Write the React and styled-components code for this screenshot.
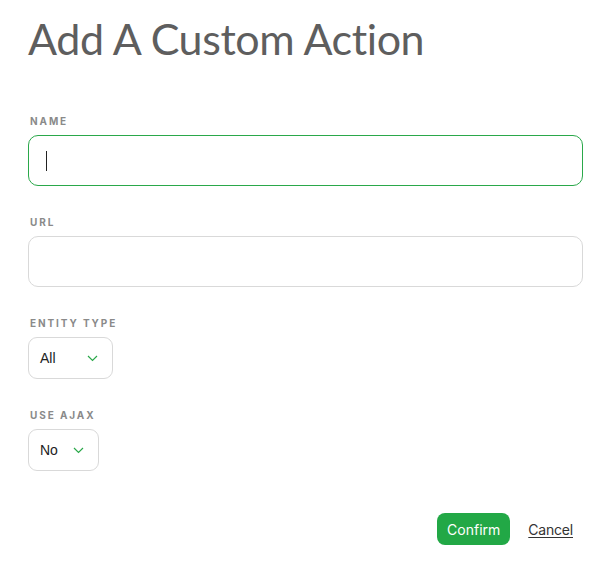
import React, { useState } from "react"
import styled, { createGlobalStyle } from "styled-components"

const GlobalStyle = createGlobalStyle`
  body {
    margin: 0;
    background: #fff;
  }
`

const Page = styled.div`
  padding: 14px 25px 0 28px;
  width: 608px;
  box-sizing: border-box;
`

const Title = styled.h1`
  font-family: Lato, "Open Sans", sans-serif;
  font-weight: 400;
  font-size: 43px;
  line-height: 50px;
  color: #5e5e5e;
  margin: 0 0 50px 0;
  letter-spacing: -0.4px;
`

const Field = styled.div`
  margin-bottom: ${(props) => props.gap ?? 29}px;
`

const Label = styled.div`
  font-family: Inter, "Liberation Sans", sans-serif;
  font-size: 10px;
  font-weight: 700;
  letter-spacing: 1.9px;
  line-height: 14px;
  color: #8a8a8a;
  margin: 0 0 7px 2px;
  text-transform: uppercase;
`

const Input = styled.div`
  height: 51px;
  box-sizing: border-box;
  border: 1px solid ${(props) => (props.focused ? "#2aa84a" : "#d9d9d9")};
  border-radius: 10px;
  display: flex;
  align-items: center;
  padding-left: 17px;
`

const Caret = styled.div`
  width: 1px;
  height: 20px;
  background: #222;
`

const Select = styled.div`
  width: ${(props) => props.width}px;
  height: 42px;
  box-sizing: border-box;
  border: 1px solid #d9d9d9;
  border-radius: 9px;
  display: flex;
  align-items: center;
  justify-content: space-between;
  padding: 0 14px 0 11px;
  font-family: "Liberation Sans", Arial, sans-serif;
  font-size: 14px;
  color: #222;
`

const Actions = styled.div`
  display: flex;
  justify-content: flex-end;
  align-items: center;
  gap: 18px;
  margin: 42px 10px 0 0;
`

const ConfirmButton = styled.button`
  font-family: Inter, "Liberation Sans", sans-serif;
  font-size: 14px;
  color: #fff;
  background: #22a846;
  border: none;
  border-radius: 8px;
  height: 32px;
  padding: 0 10px;
`

const CancelLink = styled.a`
  font-family: Inter, "Liberation Sans", sans-serif;
  font-size: 14px;
  letter-spacing: -0.2px;
  color: #333;
  text-decoration: underline;
  text-underline-offset: 2px;
`

const Chevron = () => (
  <svg width="11" height="7" viewBox="0 0 11 7" fill="none">
    <path d="M1 1l4.5 4.5L10 1" stroke="#2aa84a" strokeWidth="1.2" />
  </svg>
)

const App = () => {
  const [entity] = useState("All")
  const [ajax] = useState("No")

  return (
    <Page>
      <GlobalStyle />
      <Title>Add A Custom Action</Title>
      <Field>
        <Label>Name</Label>
        <Input focused>
          <Caret />
        </Input>
      </Field>
      <Field>
        <Label>URL</Label>
        <Input />
      </Field>
      <Field gap={29}>
        <Label>Entity Type</Label>
        <Select width={85}>
          {entity}
          <Chevron />
        </Select>
      </Field>
      <Field gap={0}>
        <Label>Use Ajax</Label>
        <Select width={71}>
          {ajax}
          <Chevron />
        </Select>
      </Field>
      <Actions>
        <ConfirmButton>Confirm</ConfirmButton>
        <CancelLink>Cancel</CancelLink>
      </Actions>
    </Page>
  )
}

export default App
